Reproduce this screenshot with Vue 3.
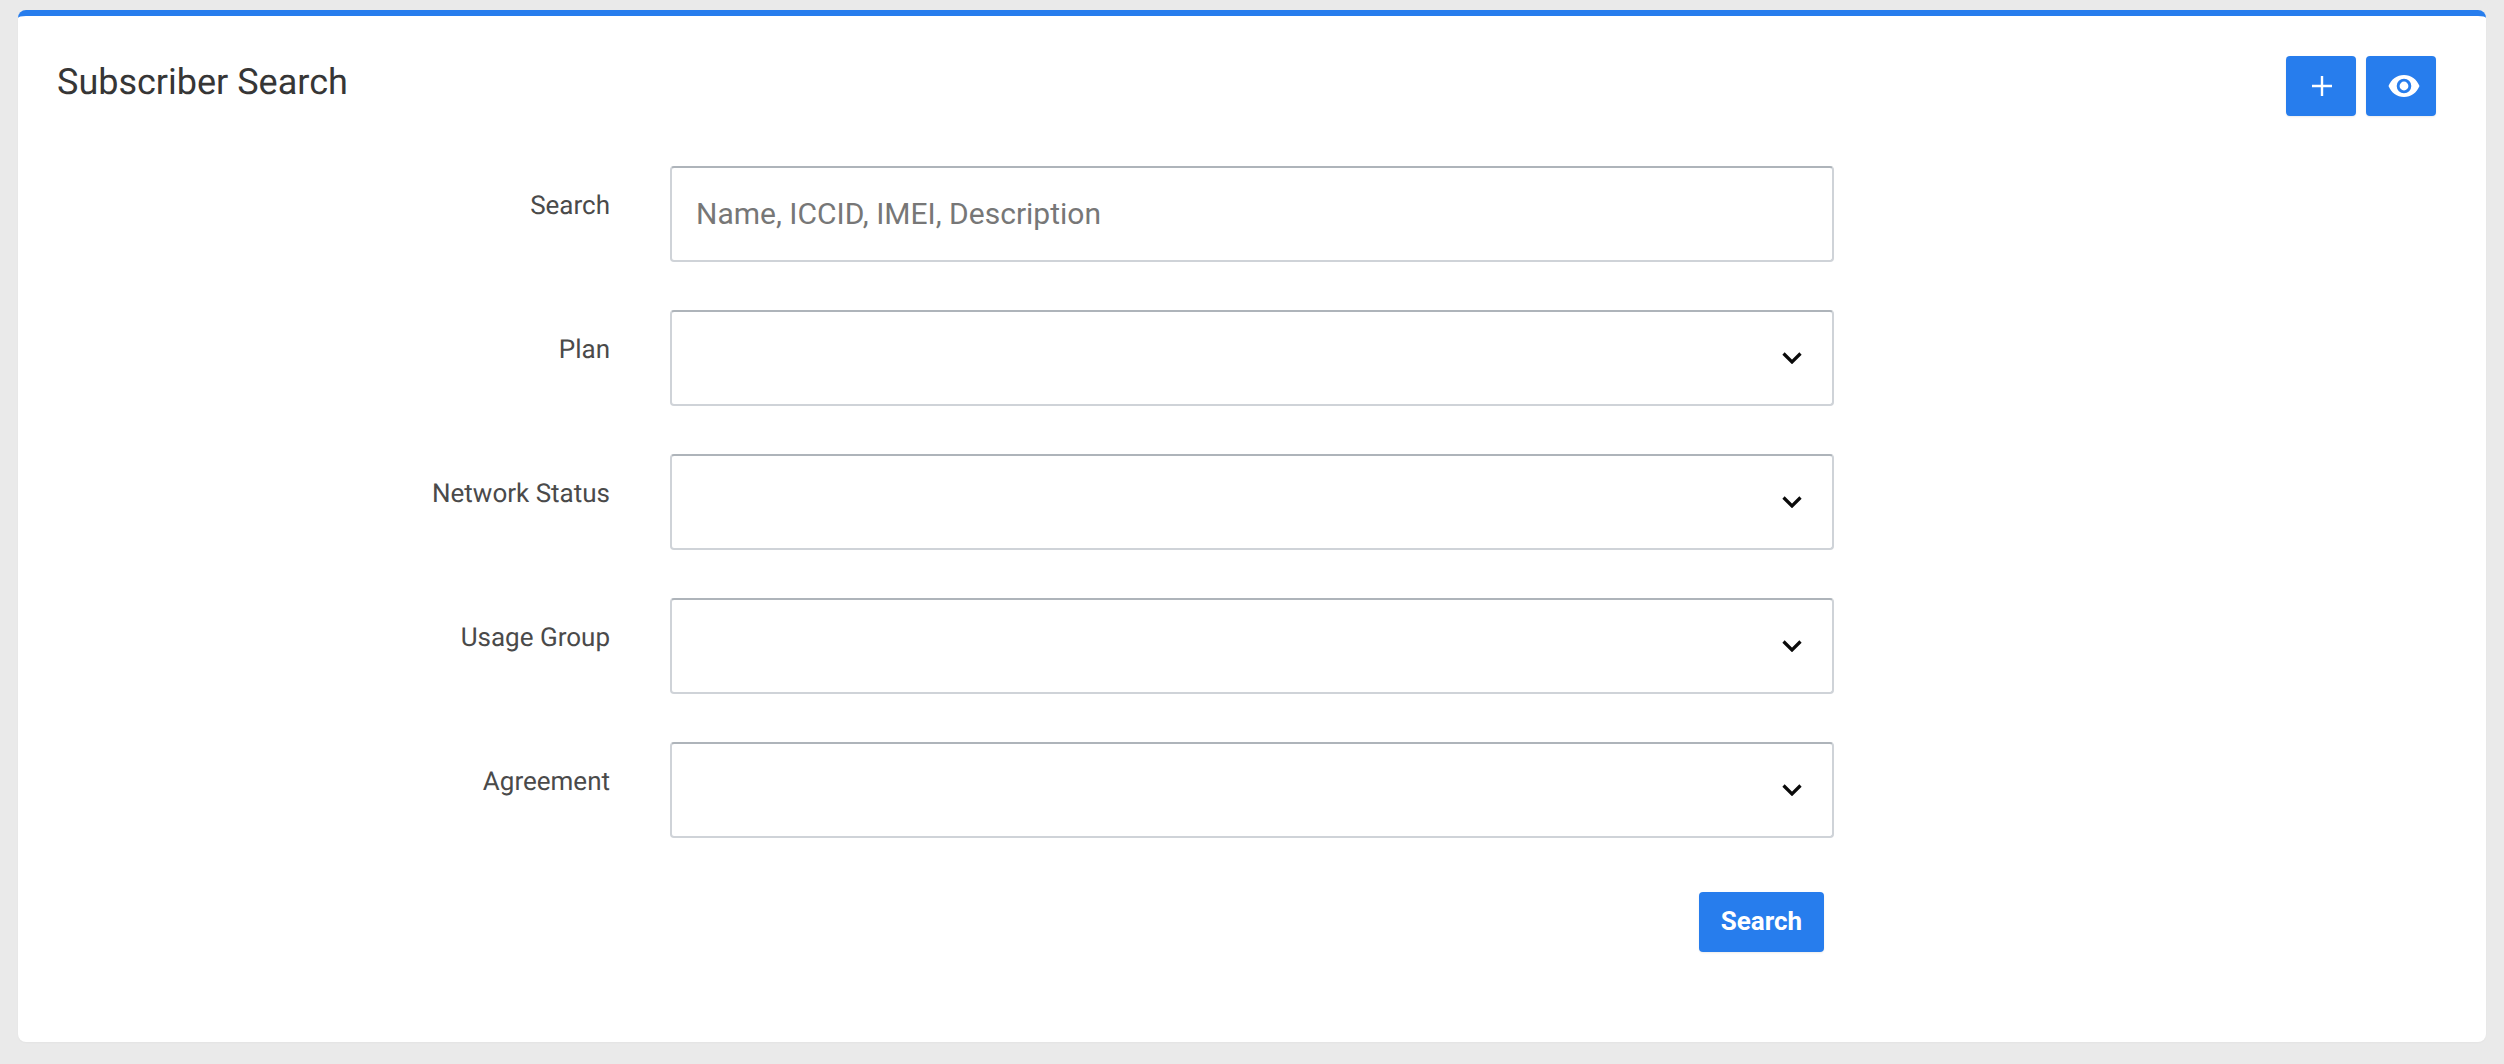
<script setup>
const selects = ['Plan', 'Network Status', 'Usage Group', 'Agreement']
</script>

<template>
  <main class="page">
    <section class="card">
      <header class="head">
        <h1 class="title">Subscriber Search</h1>
        <div class="actions">
          <button class="btn icon-btn plus" type="button" aria-label="Add">
            <svg width="20" height="20" viewBox="0 0 20 20"><path d="M10 0v20M0 10h20" stroke="#fff" stroke-width="2.4" fill="none"/></svg>
          </button>
          <button class="btn icon-btn eye" type="button" aria-label="View">
            <svg width="32" height="22" viewBox="0 0 32 22"><path fill="#fff" fill-rule="evenodd" d="M16 0C9 0 3.200 4.400 0.500 11 3.200 17.600 9 22 16 22s12.800-4.400 15.500-11C28.800 4.400 23 0 16 0zm0 18.300a7.300 7.300 0 1 1 0-14.600 7.300 7.300 0 0 1 0 14.600zM16 6.600a4.400 4.400 0 1 0 0 8.800 4.400 4.400 0 0 0 0-8.800z"/></svg>
          </button>
        </div>
      </header>

      <form class="form" @submit.prevent>
        <div class="row">
          <label class="label">Search</label>
          <input class="field" type="text" placeholder="Name, ICCID, IMEI, Description" />
        </div>
        <div v-for="name in selects" :key="name" class="row">
          <label class="label">{{ name }}</label>
          <div class="select-wrap">
            <select class="field select"></select>
            <svg class="chevron" width="20" height="12" viewBox="0 0 20 12"><path d="M1.500 1.500 10 10l8.500-8.500" stroke="#0a0a0a" stroke-width="3.200" fill="none"/></svg>
          </div>
        </div>
        <div class="submit-row">
          <button class="btn submit" type="submit">Search</button>
        </div>
      </form>
    </section>
  </main>
</template>

<style>
html, body { margin: 0; background: #eaeaea; }
</style>

<style scoped>
.page {
  padding: 10px 18px 22px;
  font-family: Roboto, "Liberation Sans", sans-serif;
  text-rendering: geometricPrecision;
}
.card {
  box-sizing: border-box;
  height: 1032px;
  background: #fff;
  border-top: 6px solid #277ded;
  border-radius: 8px;
  padding: 40px 50px 0 39px;
  box-shadow: 0 1px 2px rgba(0, 0, 0, 0.03);
}
.head {
  display: flex;
  justify-content: space-between;
  align-items: flex-start;
  margin-bottom: 50px;
}
.title {
  margin: 4px 0 0;
  font-size: 36px;
  font-weight: 400;
  line-height: 44px;
  color: #363636;
}
.actions { display: flex; gap: 10px; height: 60px; }
.btn {
  background: #277ded;
  border: 0;
  border-radius: 4px;
  color: #fff;
  padding: 0;
  font-family: inherit;
  box-shadow: 0 1px 2px rgba(0, 0, 0, 0.08);
}
.icon-btn {
  width: 70px;
  height: 60px;
  display: flex;
  align-items: center;
  justify-content: center;
}
.plus { padding-left: 2px; }
.eye { padding-left: 5px; }
.form { display: flex; flex-direction: column; gap: 48px; }
.row {
  display: grid;
  grid-template-columns: 553px 1164px;
  column-gap: 60px;
  align-items: start;
  height: 96px;
}
.label {
  text-align: right;
  font-size: 26px;
  line-height: 30px;
  padding-top: 25px;
  color: #4a4a4a;
}
.field {
  box-sizing: border-box;
  display: block;
  width: 100%;
  height: 96px;
  border: 2px solid #cfd3d8;
  border-top-color: #aeb4ba;
  border-radius: 4px;
  background: #fff;
  padding: 0 24px 2px;
  font-family: inherit;
  font-size: 30px;
  color: #363636;
  outline: none;
}
.field::placeholder { color: #777; opacity: 1; }
.select { appearance: none; -webkit-appearance: none; }
.select-wrap { position: relative; }
.chevron { position: absolute; right: 32px; top: 42px; pointer-events: none; }
.submit-row {
  display: flex;
  justify-content: flex-start;
  padding-left: 1642px;
  margin-top: 6px;
}
.submit {
  width: 125px;
  height: 60px;
  font-size: 26px;
  font-weight: 700;
  padding-bottom: 2px;
}
</style>
